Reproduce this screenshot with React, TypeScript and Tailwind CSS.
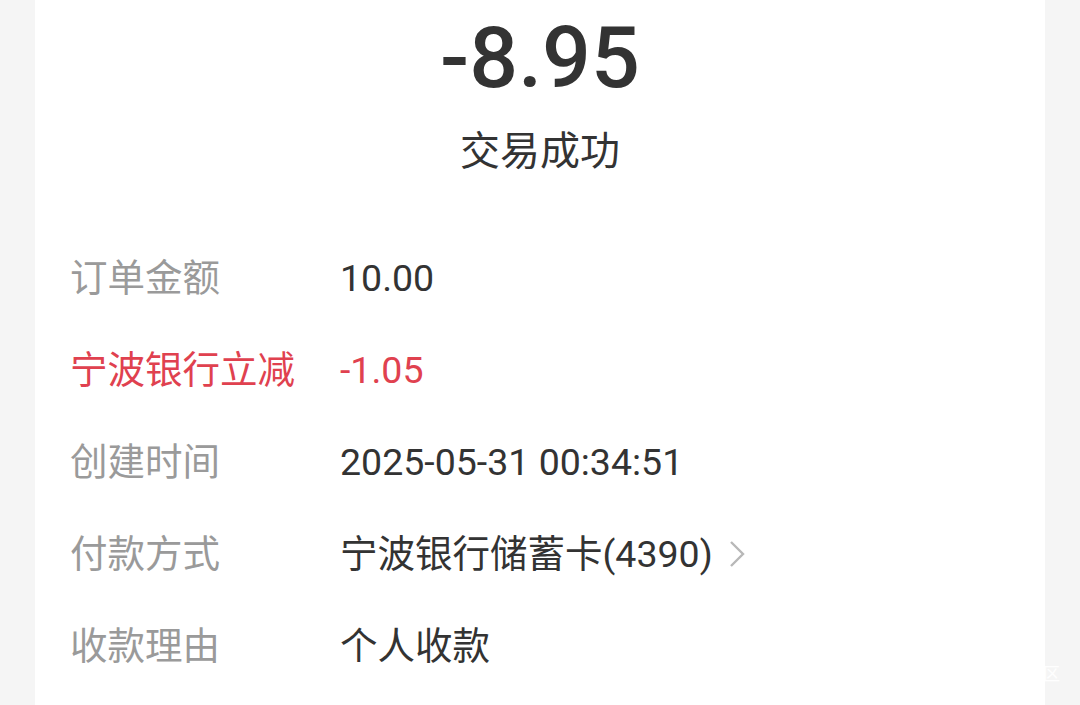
const rows = [
  { label: "订单金额", value: "10.00" },
  { label: "宁波银行立减", value: "-1.05", red: true },
  { label: "创建时间", value: "2025-05-31 00:34:51" },
  { label: "付款方式", value: "宁波银行储蓄卡(4390)", arrow: true },
  { label: "收款理由", value: "个人收款" },
];

function Chevron() {
  return (
    <svg width="18" height="28" viewBox="0 0 18 28" className="ml-[15px] shrink-0">
      <polyline points="3,2 15,14 3,26" fill="none" stroke="#b8b8b8" strokeWidth="2.4" />
    </svg>
  );
}

export default function App() {
  return (
    <div
      className="relative h-[705px] w-full overflow-hidden bg-[#f5f5f5] px-[35px]"
      style={{ fontFamily: 'Roboto, "Noto Sans CJK SC", sans-serif' }}
    >
      <div className="h-full bg-white pt-[15px]">
        {/* Amount */}
        <div className="h-[86px] text-center text-[86px] font-medium leading-[86px] text-[#333333]">
          -8.95
        </div>
        <div className="mt-[26px] h-[50px] text-center text-[40px] leading-[50px] text-[#333333]">
          交易成功
        </div>

        {/* Detail rows */}
        <div className="mt-[55px] pl-[35px]">
          {rows.map((r) => (
            <div key={r.label} className="flex h-[92px] items-center text-[37.5px]">
              <span className={`w-[270px] shrink-0 ${r.red ? "text-[#e0414f]" : "text-[#9a9a9a]"}`}>
                {r.label}
              </span>
              <span className={r.red ? "text-[#e0414f]" : "text-[#333333]"}>{r.value}</span>
              {r.arrow && <Chevron />}
            </div>
          ))}
        </div>
      </div>
      <span className="absolute left-[1043px] top-[662px] text-[17px] text-white/90">区</span>
    </div>
  );
}
